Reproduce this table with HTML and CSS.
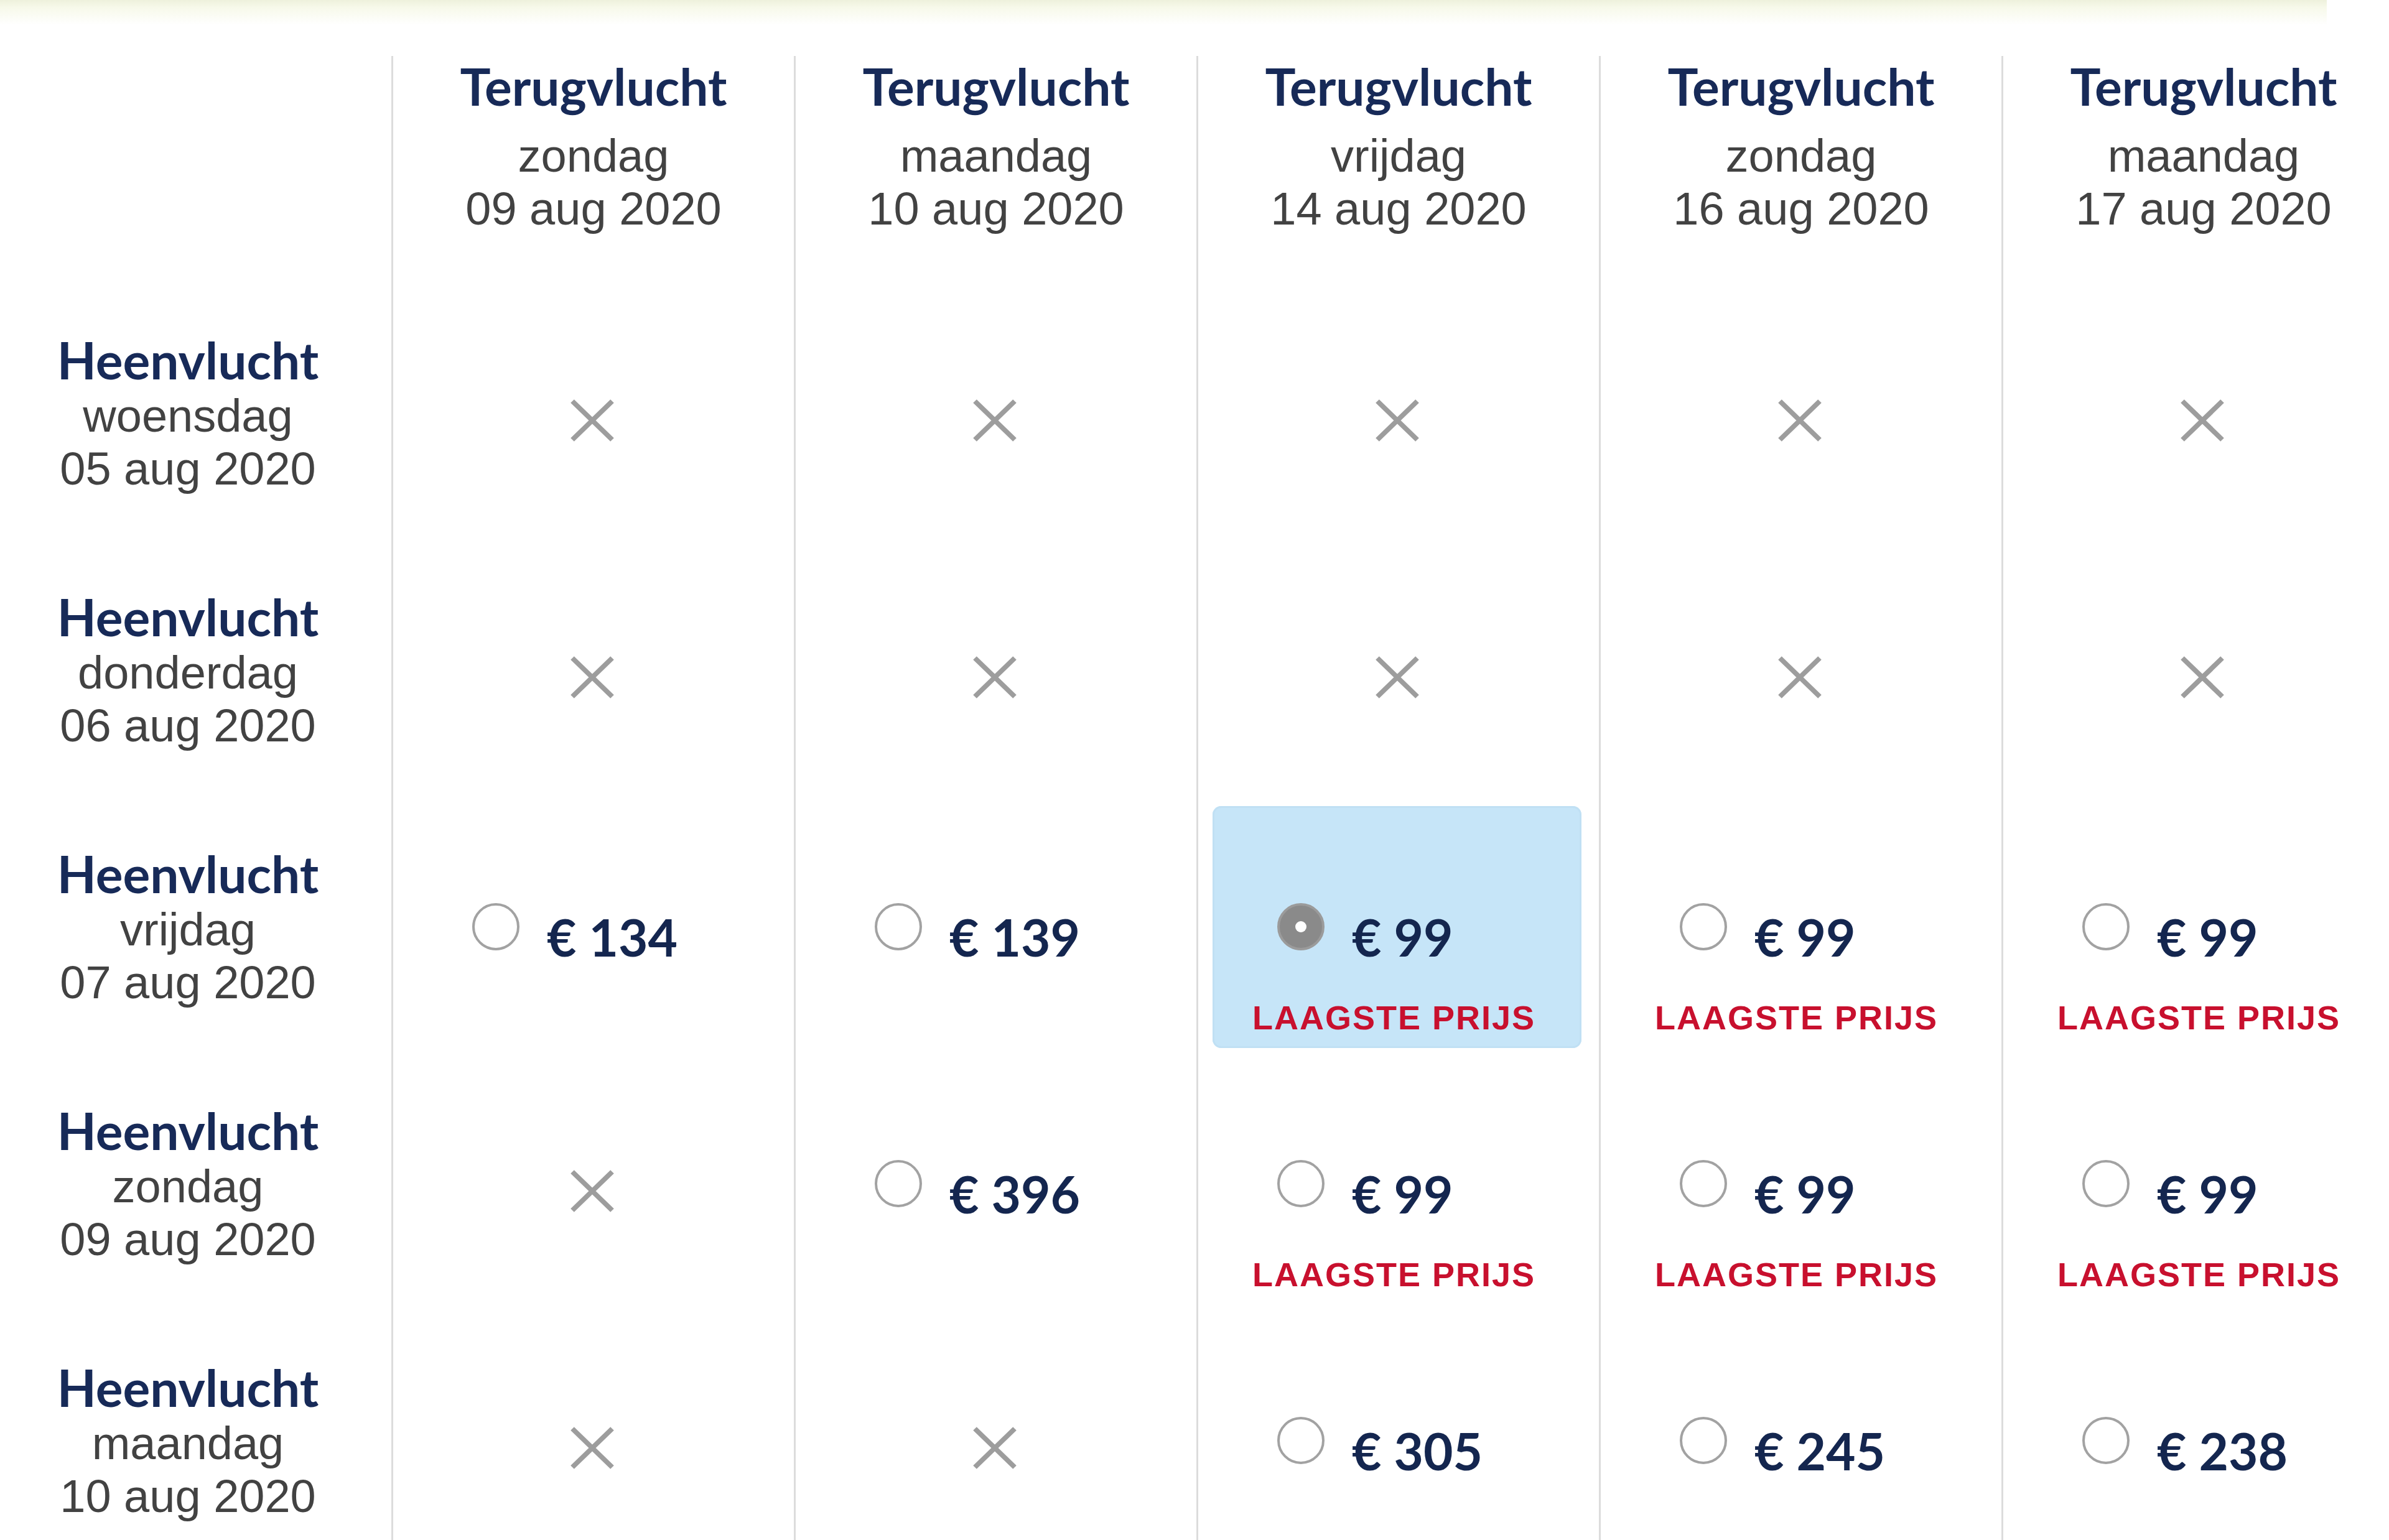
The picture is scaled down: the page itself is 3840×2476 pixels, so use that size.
FILE: index.html
```html
<!DOCTYPE html>
<html lang="nl">
<head>
<meta charset="utf-8">
<title>Vluchten</title>
<link rel="stylesheet" href="styles.css">
</head>
<body>
<div class="topband"></div>
<div class="matrix">
  <div class="corner"></div>
  <div class="hcell"><div class="title">Terugvlucht</div><div class="sub">zondag</div><div class="sub">09 aug 2020</div></div>
  <div class="hcell"><div class="title">Terugvlucht</div><div class="sub">maandag</div><div class="sub">10 aug 2020</div></div>
  <div class="hcell"><div class="title">Terugvlucht</div><div class="sub">vrijdag</div><div class="sub">14 aug 2020</div></div>
  <div class="hcell"><div class="title">Terugvlucht</div><div class="sub">zondag</div><div class="sub">16 aug 2020</div></div>
  <div class="hcell"><div class="title">Terugvlucht</div><div class="sub">maandag</div><div class="sub">17 aug 2020</div></div>

  <div class="rlabel"><div class="title">Heenvlucht</div><div class="sub">woensdag</div><div class="sub">05 aug 2020</div></div>
  <div class="cell"><div class="opt none"><svg class="x" viewBox="0 0 74 70"><path d="M5 4 L69 66 M69 4 L5 66"/></svg></div></div>
  <div class="cell"><div class="opt none"><svg class="x" viewBox="0 0 74 70"><path d="M5 4 L69 66 M69 4 L5 66"/></svg></div></div>
  <div class="cell"><div class="opt none"><svg class="x" viewBox="0 0 74 70"><path d="M5 4 L69 66 M69 4 L5 66"/></svg></div></div>
  <div class="cell"><div class="opt none"><svg class="x" viewBox="0 0 74 70"><path d="M5 4 L69 66 M69 4 L5 66"/></svg></div></div>
  <div class="cell"><div class="opt none"><svg class="x" viewBox="0 0 74 70"><path d="M5 4 L69 66 M69 4 L5 66"/></svg></div></div>

  <div class="rlabel"><div class="title">Heenvlucht</div><div class="sub">donderdag</div><div class="sub">06 aug 2020</div></div>
  <div class="cell"><div class="opt none"><svg class="x" viewBox="0 0 74 70"><path d="M5 4 L69 66 M69 4 L5 66"/></svg></div></div>
  <div class="cell"><div class="opt none"><svg class="x" viewBox="0 0 74 70"><path d="M5 4 L69 66 M69 4 L5 66"/></svg></div></div>
  <div class="cell"><div class="opt none"><svg class="x" viewBox="0 0 74 70"><path d="M5 4 L69 66 M69 4 L5 66"/></svg></div></div>
  <div class="cell"><div class="opt none"><svg class="x" viewBox="0 0 74 70"><path d="M5 4 L69 66 M69 4 L5 66"/></svg></div></div>
  <div class="cell"><div class="opt none"><svg class="x" viewBox="0 0 74 70"><path d="M5 4 L69 66 M69 4 L5 66"/></svg></div></div>

  <div class="rlabel"><div class="title">Heenvlucht</div><div class="sub">vrijdag</div><div class="sub">07 aug 2020</div></div>
  <div class="cell"><div class="opt"><div class="pline"><span class="radio"></span><span class="price">€ 134</span></div></div></div>
  <div class="cell"><div class="opt"><div class="pline"><span class="radio"></span><span class="price">€ 139</span></div></div></div>
  <div class="cell"><div class="opt selected"><div class="pline"><span class="radio checked"></span><span class="price">€ 99</span></div><div class="low">LAAGSTE PRIJS</div></div></div>
  <div class="cell"><div class="opt"><div class="pline"><span class="radio"></span><span class="price">€ 99</span></div><div class="low">LAAGSTE PRIJS</div></div></div>
  <div class="cell"><div class="opt"><div class="pline"><span class="radio"></span><span class="price">€ 99</span></div><div class="low">LAAGSTE PRIJS</div></div></div>

  <div class="rlabel"><div class="title">Heenvlucht</div><div class="sub">zondag</div><div class="sub">09 aug 2020</div></div>
  <div class="cell"><div class="opt none"><svg class="x" viewBox="0 0 74 70"><path d="M5 4 L69 66 M69 4 L5 66"/></svg></div></div>
  <div class="cell"><div class="opt"><div class="pline"><span class="radio"></span><span class="price">€ 396</span></div></div></div>
  <div class="cell"><div class="opt"><div class="pline"><span class="radio"></span><span class="price">€ 99</span></div><div class="low">LAAGSTE PRIJS</div></div></div>
  <div class="cell"><div class="opt"><div class="pline"><span class="radio"></span><span class="price">€ 99</span></div><div class="low">LAAGSTE PRIJS</div></div></div>
  <div class="cell"><div class="opt"><div class="pline"><span class="radio"></span><span class="price">€ 99</span></div><div class="low">LAAGSTE PRIJS</div></div></div>

  <div class="rlabel"><div class="title">Heenvlucht</div><div class="sub">maandag</div><div class="sub">10 aug 2020</div></div>
  <div class="cell"><div class="opt none"><svg class="x" viewBox="0 0 74 70"><path d="M5 4 L69 66 M69 4 L5 66"/></svg></div></div>
  <div class="cell"><div class="opt none"><svg class="x" viewBox="0 0 74 70"><path d="M5 4 L69 66 M69 4 L5 66"/></svg></div></div>
  <div class="cell"><div class="opt"><div class="pline"><span class="radio"></span><span class="price">€ 305</span></div></div></div>
  <div class="cell"><div class="opt"><div class="pline"><span class="radio"></span><span class="price">€ 245</span></div></div></div>
  <div class="cell"><div class="opt"><div class="pline"><span class="radio"></span><span class="price">€ 238</span></div></div></div>
</div>
</body>
</html>
```
FILE: styles.css
```css
html, body {
  margin: 0;
  padding: 0;
  background: #ffffff;
  overflow: hidden;
}
body {
  width: 3840px;
  height: 2476px;
  font-family: "Liberation Sans", Arial, sans-serif;
}
.topband {
  width: 3740px;
  height: 40px;
  background: linear-gradient(#eef1dc 0px, #f7f9ea 12px, #ffffff 40px);
}
.matrix {
  margin-top: 50px;
  display: grid;
  grid-template-columns: 629px repeat(5, 647px);
  grid-template-rows: 373px repeat(5, 413px);
  width: 3864px;
}
.title {
  font-family: Lato, "Open Sans", sans-serif;
  font-weight: 700;
  font-size: 82px;
  line-height: 96px;
  color: #172a58;
}
.sub {
  font-family: "Liberation Sans", Arial, sans-serif;
  font-size: 74px;
  line-height: 85px;
  color: #424242;
}
.hcell {
  border-left: 3px solid #dcdcdc;
  text-align: center;
}
.hcell .title {
  margin-bottom: 22px;
}
.rlabel {
  text-align: center;
  padding-top: 67px;
  padding-right: 25px;
}
.cell {
  border-left: 3px solid #dcdcdc;
  padding: 7px 28px 17px 23px;
  box-sizing: border-box;
}
.opt {
  height: 100%;
  box-sizing: border-box;
  border-radius: 14px;
  padding-top: 160px;
}
.opt.selected {
  background: #c6e5f8;
  box-shadow: inset 0 0 0 3px #c0e0f4;
}
.opt.none {
  padding-top: 171px;
  display: flex;
  justify-content: center;
  align-items: flex-start;
}
.x {
  width: 74px;
  height: 70px;
}
.x path {
  stroke: #9d9d9d;
  stroke-width: 8;
  fill: none;
}
.pline {
  display: flex;
  align-items: center;
  padding-left: 104px;
  height: 100px;
}
.radio {
  width: 76px;
  height: 76px;
  box-sizing: border-box;
  border: 4px solid #a2a2a2;
  border-radius: 50%;
  background: #ffffff;
  margin-bottom: 32px;
  margin-right: 44px;
  flex: none;
  display: flex;
  align-items: center;
  justify-content: center;
}
.radio.checked {
  background: #8a8a8a;
  border-color: #9b9b9b;
}
.radio.checked::after {
  content: "";
  width: 18px;
  height: 18px;
  border-radius: 50%;
  background: #ffffff;
}
.price {
  font-family: Lato, "Open Sans", sans-serif;
  font-weight: 700;
  font-size: 82px;
  line-height: 100px;
  color: #14264f;
  white-space: nowrap;
}
.low {
  margin-top: 50px;
  padding-right: 10px;
  text-align: center;
  font-family: "Liberation Sans", Arial, sans-serif;
  font-weight: 700;
  font-size: 54px;
  line-height: 60px;
  letter-spacing: 2px;
  color: #c8102e;
  white-space: nowrap;
}
```
